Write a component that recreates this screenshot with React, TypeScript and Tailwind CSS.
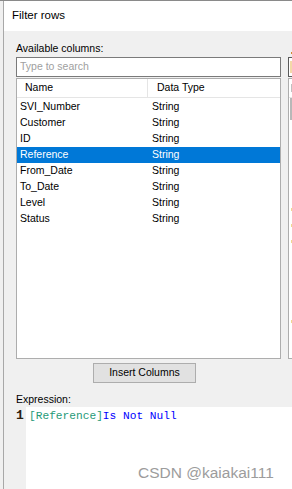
import React from "react";

const rows = [
  "SVI_Number",
  "Customer",
  "ID",
  "Reference",
  "From_Date",
  "To_Date",
  "Level",
  "Status",
];

export default function App() {
  return (
    <div
      className="relative w-[292px] h-[489px] overflow-hidden bg-[#f0f0f0] border-t border-[#8a8a8a] pl-[3px] flex"
      style={{ fontFamily: '"Liberation Sans", Arial, sans-serif' }}
    >
      <div className="flex-1 flex flex-col border-l border-[#a8a8a8] min-w-0">
        {/* Title bar */}
        <div className="h-[30px] bg-white flex items-center pl-[8px] shrink-0">
          <span className="text-[11.5px] text-black leading-none">Filter rows</span>
        </div>

        {/* Body */}
        <div className="flex-1 flex flex-col pl-[12px] min-h-0">
          <div className="flex gap-[7px] mt-[10px]">
            {/* Left panel */}
            <div className="w-[265px] shrink-0 flex flex-col">
              <div className="text-[10.5px] leading-[14px] h-[16px] text-black">Available columns:</div>
              <div className="h-[20px] border border-[#7a7a7a] bg-white flex items-center pl-[3px]">
                <span className="text-[10.5px] text-[#a0a0a0]">Type to search</span>
              </div>
              <div className="mt-[1px] h-[281px] border border-[#adadad] bg-white flex flex-col">
                <div className="h-[19px] flex border-b border-[#e5e5e5] shrink-0">
                  <div className="w-[131px] border-r border-[#e5e5e5] pl-[8px] flex items-center text-[10.5px] text-black">
                    Name
                  </div>
                  <div className="flex-1 pl-[9px] flex items-center text-[10.5px] text-black">Data Type</div>
                </div>
                <div className="pt-[1px] flex flex-col">
                  {rows.map((r) => {
                    const sel = r === "Reference";
                    return (
                      <div
                        key={r}
                        className={
                          sel
                            ? "h-[16px] flex items-center bg-[#0078d7] text-white text-[10.5px]"
                            : "h-[16px] flex items-center text-black text-[10.5px]"
                        }
                      >
                        <div className="w-[131px] pl-[3px]">{r}</div>
                        <div className="flex-1 pl-[4px]">String</div>
                      </div>
                    );
                  })}
                </div>
              </div>
            </div>

            {/* Right panel (clipped) */}
            <div className="w-[120px] shrink-0 flex flex-col">
              <div className="h-[16px] flex items-end pb-[3px] pl-[3px]">
                <div className="w-[3px] h-[2px] bg-[#d08a30]" />
              </div>
              <div className="h-[20px] border border-[#5a5a5a] bg-white flex items-center pl-[1px]">
                <div className="w-[3px] h-[12px] bg-[#f3d9a8]" />
              </div>
              <div className="mt-[1px] h-[281px] border border-[#adadad] bg-white flex flex-col">
                <div className="h-[19px] border-b border-[#e5e5e5] flex items-center pl-[2px]">
                  <div className="w-[1px] h-[8px] bg-[#c0c0c0]" />
                </div>
                <div className="h-[22px] w-[3px] bg-[#b8b8b8] ml-[1px]" />
                <div className="mt-[88px] flex flex-col gap-[13px] pl-[2px]">
                  <div className="w-[3px] h-[3px] bg-[#f0d890]" />
                  <div className="w-[3px] h-[3px] bg-[#f0d890]" />
                  <div className="w-[3px] h-[3px] bg-[#f0d890]" />
                </div>
                <div className="mt-[77px] pl-[2px]">
                  <div className="w-[3px] h-[3px] bg-[#f0d890]" />
                </div>
              </div>
            </div>
          </div>

          {/* Insert Columns button */}
          <div className="mt-[4px] ml-[77px]">
            <div className="w-[103px] h-[20px] border border-[#adadad] bg-[#e1e1e1] flex items-center justify-center text-[10.5px] text-black">
              Insert Columns
            </div>
          </div>

          {/* Expression label */}
          <div className="mt-[9px] h-[15px] text-[10.5px] leading-[14px] text-black">Expression:</div>

          {/* Editor */}
          <div className="flex-1 flex min-h-0">
            <div
              className="w-[10px] shrink-0 pt-[2px] text-[13px] leading-[14px] font-bold text-[#2a2010]"
              style={{ fontFamily: '"Liberation Mono", "Courier New", monospace' }}
            >
              1
            </div>
            <div
              className="flex-1 bg-white pt-[2px] pl-[3px] text-[11.2px] leading-[14px] whitespace-pre"
              style={{ fontFamily: '"Liberation Mono", "Courier New", monospace' }}
            >
              <span className="text-[#1f9a78]">[Reference]</span>
              <span className="text-[#0000ff]">Is Not Null</span>
            </div>
          </div>
        </div>
      </div>

      {/* Watermark */}
      <div className="absolute left-[138px] top-[462px] text-[15.5px] leading-[20px] text-[#9c9c9c] whitespace-nowrap">
        CSDN @kaiakai111
      </div>
    </div>
  );
}
